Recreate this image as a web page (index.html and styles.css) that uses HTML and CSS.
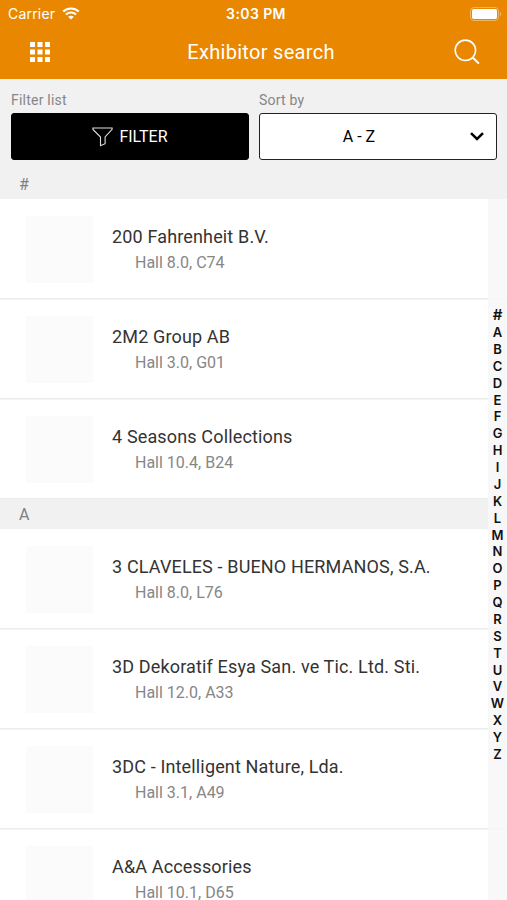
FILE: index.html
```html
<!DOCTYPE html>
<html lang="en">
<head>
<meta charset="utf-8">
<title>Exhibitor search</title>
<link rel="stylesheet" href="styles.css">
</head>
<body>
<div class="app">
  <header class="header">
    <div class="status">
      <div class="carrier"><span>Carrier</span>
        <svg class="wifi" width="18" height="13" viewBox="0 0 18 13" fill="none" stroke="#fff" stroke-width="2.1"><path d="M1.2 4.6C5.6.4 12.4.4 16.8 4.6M3.9 7.6c2.9-2.8 7.3-2.8 10.2 0"/><path d="M9 12.6 6.1 9.8c1.6-1.5 4.2-1.5 5.8 0z" fill="#fff" stroke="none"/></svg>
      </div>
      <span class="clock">3:03 PM</span>
      <svg class="battery" width="32" height="14" viewBox="0 0 32 14"><rect x=".5" y=".5" width="28" height="13" rx="3.5" fill="none" stroke="#f2b45c"/><rect x="2" y="2" width="25" height="10" rx="1.8" fill="#fff"/><path d="M30 4.8c1.6.6 1.6 3.8 0 4.4z" fill="#f2b45c"/></svg>
    </div>
    <div class="navbar">
      <svg class="menu" width="20" height="20" viewBox="0 0 20 20" fill="#fff"><path d="M0 0h5v5H0zM7.5 0h5v5h-5zM15 0h5v5h-5zM0 7.5h5v5H0zM7.5 7.5h5v5h-5zM15 7.5h5v5h-5zM0 15h5v5H0zM7.5 15h5v5h-5zM15 15h5v5h-5z"/></svg>
      <h1 class="title">Exhibitor search</h1>
      <svg class="search" width="26" height="26" viewBox="0 0 26 26" fill="none" stroke="#fff" stroke-width="1.6"><circle cx="11.4" cy="11.3" r="10.2"/><path d="m18.7 18.5 6.2 6.1" stroke-width="2"/></svg>
    </div>
  </header>
  <section class="controls">
    <div class="field">
      <span class="label">Filter list</span>
      <button class="filter"><svg width="21" height="20" viewBox="0 0 21 20" fill="none" stroke="#ddd" stroke-width="1.1"><path d="M.9 1h19.2v1.4l-7 7.6v6.7l-4.6 2V10L.9 2.4z"/></svg><span>FILTER</span></button>
    </div>
    <div class="field">
      <span class="label">Sort by</span>
      <button class="sort"><span class="value">A - Z</span><svg width="14" height="9" viewBox="0 0 14 9" fill="none" stroke="#000" stroke-width="2.5"><path d="m1 1.2 6 5.8 6-5.8"/></svg></button>
    </div>
  </section>
  <main class="list">
    <h2 class="group first">#</h2>
    <article class="row"><div class="thumb"></div><div class="info"><h3>200 Fahrenheit B.V.</h3><p>Hall 8.0, C74</p></div></article>
    <article class="row"><div class="thumb"></div><div class="info"><h3>2M2 Group AB</h3><p>Hall 3.0, G01</p></div></article>
    <article class="row"><div class="thumb"></div><div class="info"><h3>4 Seasons Collections</h3><p>Hall 10.4, B24</p></div></article>
    <h2 class="group">A</h2>
    <article class="row"><div class="thumb"></div><div class="info"><h3>3 CLAVELES - BUENO HERMANOS, S.A.</h3><p>Hall 8.0, L76</p></div></article>
    <article class="row"><div class="thumb"></div><div class="info"><h3>3D Dekoratif Esya San. ve Tic. Ltd. Sti.</h3><p>Hall 12.0, A33</p></div></article>
    <article class="row"><div class="thumb"></div><div class="info"><h3>3DC - Intelligent Nature, Lda.</h3><p>Hall 3.1, A49</p></div></article>
    <article class="row"><div class="thumb"></div><div class="info"><h3>A&amp;A Accessories</h3><p>Hall 10.1, D65</p></div></article>
  </main>
  <nav class="index"><b class="hash">#</b><b>A</b><b>B</b><b>C</b><b>D</b><b>E</b><b>F</b><b>G</b><b>H</b><b>I</b><b>J</b><b>K</b><b>L</b><b>M</b><b>N</b><b>O</b><b>P</b><b>Q</b><b>R</b><b>S</b><b>T</b><b>U</b><b>V</b><b>W</b><b>X</b><b>Y</b><b>Z</b></nav>
</div>
</body>
</html>
```
FILE: styles.css
```css
* { box-sizing: border-box; }
body { margin: 0; font-family: Roboto, sans-serif; }
h1, h2, h3, p { margin: 0; font-weight: 400; }
svg { display: block; flex: none; }

.app { position: relative; height: 900px; overflow: hidden; background: #fff; }

.header { height: 79px; background: #e98800; color: #fff; }
.status {
  display: grid;
  grid-template-columns: 1fr auto 1fr;
  align-items: center;
  height: 27px;
  padding: 0 5px 0 8px;
  font-family: Inter, sans-serif;
}
.carrier { display: flex; align-items: center; gap: 7px; font-size: 14px; letter-spacing: .2px; }
.clock { font-size: 14px; font-weight: 600; letter-spacing: .4px; padding-left: 2px; }
.battery { justify-self: end; }
.navbar {
  display: grid;
  grid-template-columns: 1fr auto 1fr;
  align-items: center;
  height: 50px;
  padding: 0 27px 0 30px;
}
.title { font-size: 20px; letter-spacing: .3px; padding-left: 12px; }
.search { justify-self: end; }

.controls {
  display: grid;
  grid-template-columns: 1fr 1fr;
  gap: 10px;
  height: 90px;
  padding: 11px 10px 0 11px;
  background: #f1f1f1;
}
.label { display: block; height: 23px; line-height: 20px; font-size: 14px; letter-spacing: .22px; color: #868686; }
.filter, .sort {
  display: flex;
  align-items: center;
  width: 100%;
  height: 47px;
  border: 1px solid #000;
  border-radius: 3px;
  font: 16px Roboto, sans-serif;
}
.filter { justify-content: center; gap: 6px; padding: 0; background: #000; color: #fff; }
.sort { padding: 0 12px 0 0; border: 1px solid #222; background: #fff; color: #000; }
.value { flex: 1; padding-right: 12px; text-align: center; }

.group {
  height: 30px;
  padding-left: 19px;
  background: #f1f1f1;
  color: #808080;
  font-size: 16px;
  line-height: 31px;
}
.row {
  display: flex;
  height: 100px;
  padding: 17px 0 0 26px;
  box-shadow: 0 1px #f3f3f3;
  border-bottom: 1px solid #ebebeb;
}
.thumb { width: 67px; height: 67px; margin-right: 19px; background: #fbfbfb; }
.info h3 { height: 26px; margin-top: 8px; font-size: 18px; letter-spacing: .15px; line-height: 26px; color: #333; white-space: nowrap; }
.info p { padding-left: 23px; font-size: 16px; line-height: 25px; color: #868686; }

.index {
  position: absolute;
  top: 199px;
  right: 0;
  bottom: 0;
  width: 19px;
  padding-top: 107px;
  background: rgba(247, 247, 247, .9);
  text-align: center;
  font-family: Inter, sans-serif;
  font-size: 13px;
}
.index b { display: block; height: 16.88px; line-height: 17px; font-weight: 600; color: #111; }
.index .hash { height: 18px; font-size: 15px; }
```
